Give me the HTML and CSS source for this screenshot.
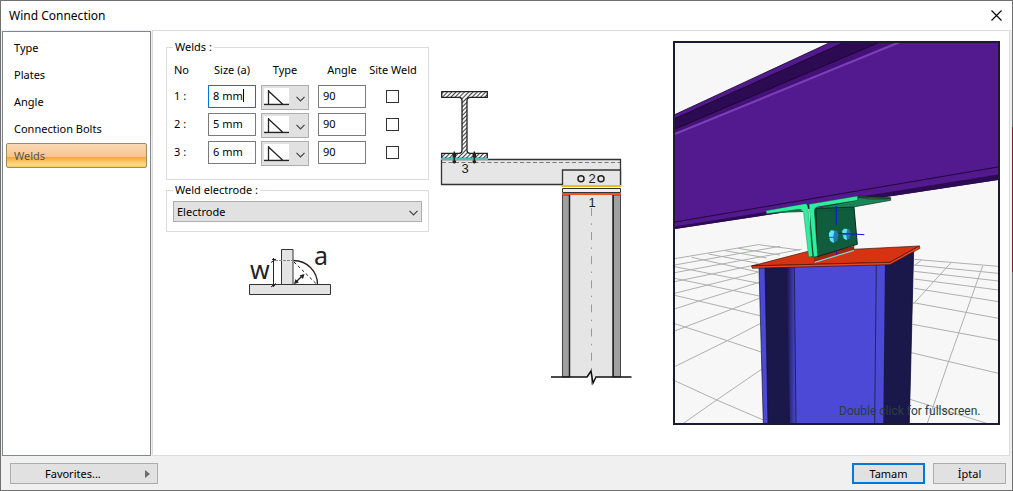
FILE: index.html
```html
<!DOCTYPE html>
<html lang="en">
<head>
<meta charset="utf-8">
<title>Wind Connection</title>
<link rel="stylesheet" href="styles.css">
</head>
<body>
<main class="dialog">
  <header class="titlebar">
    <h1 class="title">Wind Connection</h1>
    <button class="close" type="button" aria-label="Close">
      <svg width="11" height="11" viewBox="0 0 11 11"><path d="M.5.5l10 10M10.5.5l-10 10" stroke="#000" stroke-width="1.1"/></svg>
    </button>
  </header>

  <div class="body">
    <nav class="pages">
      <button class="page" type="button">Type</button>
      <button class="page" type="button">Plates</button>
      <button class="page" type="button">Angle</button>
      <button class="page" type="button">Connection Bolts</button>
      <button class="page selected" type="button" aria-current="page">Welds</button>
    </nav>

    <section class="panel">
      <form class="settings">
        <fieldset class="group">
          <legend>Welds :</legend>
          <div class="welds">
            <span>No</span><span class="head">Size (a)</span><span class="head">Type</span><span class="head">Angle</span><span class="head site">Site Weld</span>

            <span class="no">1 :</span>
            <span class="caret"><input class="field active" aria-label="Size 1" value="8 mm"></span>
            <span class="pick"><select class="drop small" aria-label="Type 1"><option aria-label="Fillet"></option></select><svg class="fillet" width="25" height="18" viewBox="0 0 25 18"><path d="M0 0h25v18H0z" fill="#fff"/><path d="M0 16.500h25M4.500 2v14M4.500 3l14 13" stroke="#222" stroke-width="1.300" fill="none"/></svg><svg class="arrow" width="9" height="6" viewBox="0 0 9 6"><path d="M.5.8l4 4 4-4" stroke="#444" stroke-width="1.200" fill="none"/></svg></span>
            <input class="field" aria-label="Angle 1" value="90">
            <input class="check" type="checkbox" aria-label="Site weld 1">

            <span class="no">2 :</span>
            <input class="field" aria-label="Size 2" value="5 mm">
            <span class="pick"><select class="drop small" aria-label="Type 2"><option aria-label="Fillet"></option></select><svg class="fillet" width="25" height="18" viewBox="0 0 25 18"><path d="M0 0h25v18H0z" fill="#fff"/><path d="M0 16.500h25M4.500 2v14M4.500 3l14 13" stroke="#222" stroke-width="1.300" fill="none"/></svg><svg class="arrow" width="9" height="6" viewBox="0 0 9 6"><path d="M.5.8l4 4 4-4" stroke="#444" stroke-width="1.200" fill="none"/></svg></span>
            <input class="field" aria-label="Angle 2" value="90">
            <input class="check" type="checkbox" aria-label="Site weld 2">

            <span class="no">3 :</span>
            <input class="field" aria-label="Size 3" value="6 mm">
            <span class="pick"><select class="drop small" aria-label="Type 3"><option aria-label="Fillet"></option></select><svg class="fillet" width="25" height="18" viewBox="0 0 25 18"><path d="M0 0h25v18H0z" fill="#fff"/><path d="M0 16.500h25M4.500 2v14M4.500 3l14 13" stroke="#222" stroke-width="1.300" fill="none"/></svg><svg class="arrow" width="9" height="6" viewBox="0 0 9 6"><path d="M.5.8l4 4 4-4" stroke="#444" stroke-width="1.200" fill="none"/></svg></span>
            <input class="field" aria-label="Angle 3" value="90">
            <input class="check" type="checkbox" aria-label="Site weld 3">
          </div>
        </fieldset>

        <fieldset class="group">
          <legend>Weld electrode :</legend>
          <div class="pick wide">
            <select class="drop" aria-label="Weld electrode"><option>Electrode</option></select><svg class="arrow" width="9" height="6" viewBox="0 0 9 6"><path d="M.5.8l4 4 4-4" stroke="#444" stroke-width="1.200" fill="none"/></svg>
          </div>
        </fieldset>

        <svg class="legend-pic" width="84" height="62" viewBox="248 236 84 62">
          <g fill="#e4e4e4" stroke="#333"><path d="M281.500 250.500h11.500v35h-11.500zM249.500 285.500h81v10h-81z"/></g>
          <g fill="none" stroke="#222">
            <path d="M293.500 261.500A24 24 0 0 1 317.500 285.500" stroke-width="1.300"/>
            <path d="M294 263l22.500 22" stroke-dasharray="3 2.500"/>
            <path d="M295 284l8-8" stroke-width="1.300"/>
            <path d="M275 261.500h18" stroke="#888" stroke-dasharray="3 1"/>
            <path d="M273.500 259v29M271 263.500l5-3.500M271 288l5-3.500M272 260.500h3M272 286.500h3"/>
          </g>
          <path d="M294 285l1.500-5 3.300 3.500zM304.500 275l-1.500 5-3.500-3.500z" fill="#222"/>
          <text class="symbol" x="250" y="280">w</text>
          <text class="symbol" x="314" y="266">a</text>
        </svg>
      </form>

      <svg class="section" width="192" height="304" viewBox="440 84 192 304">
        <defs>
          <pattern id="hatch" width="3" height="3" patternUnits="userSpaceOnUse" patternTransform="rotate(45)"><path d="M0 0h3v3H0z" fill="#f5f5f5"/><path d="M.5 0v3" stroke="#444"/></pattern>
        </defs>
        <path d="M441.500 159.500h179v25h-179z" fill="#e6e6e6" stroke="#333" stroke-width="1.300"/>
        <path d="M442 162.500h178" stroke="#777" stroke-dasharray="4 2.500"/>
        <path d="M441.700 91.700h45.600v5.600h-17q-3.300 0-3.300 3.300v49.500q0 3.300 3.300 3.300h17v5h-45.600v-5h17.500q2.800 0 2.800-3.300v-49.500q0-3.300-2.800-3.300h-17.500z" fill="url(#hatch)" stroke="#222" stroke-width="1.300"/>
        <path d="M441 159h47" stroke="#50bcc0" stroke-width="2"/>
        <path d="M454.300 151.500v12M474.300 151.500v12" stroke="#222" stroke-width="1.500"/>
        <path d="M454.300 153.500v4M474.300 153.500v4M454.300 160.500v2.500M474.300 160.500v2.500" stroke="#222" stroke-width="3.500"/>
        <path d="M562.500 170h58v16h-58z" fill="#e6e6e6" stroke="#333" stroke-width="1.300"/>
        <g fill="none" stroke="#222" stroke-width="1.500"><circle cx="581" cy="178.800" r="3"/><circle cx="601" cy="178.800" r="3"/></g>
        <path d="M562.500 188.500h58v4h-58z" fill="#eee" stroke="#333"/>
        <path d="M562 195h58.500v182H562z" fill="#e5e5e5"/>
        <path d="M562.500 195h7v182h-7zM613.500 195h7v182h-7z" fill="#a0a0a0" stroke="#444"/>
        <path d="M569.500 195v182M613 195v182" stroke="#222" stroke-width="1.500"/>
        <path d="M562 186h59" stroke="#f5b81c" stroke-width="2"/>
        <path d="M562 194h59" stroke="#f4511e" stroke-width="2"/>
        <path d="M591.500 208v180" stroke="#999" stroke-dasharray="8 7.300 1.500 7.300"/>
        <path d="M551 377h36l4-6 2 12 3-6h35.500" fill="none" stroke="#111" stroke-width="1.500"/>
        <text class="mark" x="465" y="173">3</text>
        <text class="mark" x="592" y="183">2</text>
        <text class="mark" x="592" y="207">1</text>
      </svg>

      <svg class="viewer" viewBox="675 43 323 380" role="img" aria-label="3D preview">
        <defs>
          <linearGradient id="fillet3d"><stop offset="0" stop-color="#1a184b"/><stop offset="1" stop-color="#4b49d4"/></linearGradient>
        </defs>
        <path d="M675 43h323v380H675z" fill="#f7f7f7"/>
        <!-- ground grid -->
        <g transform="translate(670 230) scale(.3333)" fill="none" stroke="#adb0ad" stroke-width="3">
          <path d="M14 86L265 44M14 105L330 49M14 128L395 58M14 155L265 103M14 190L265 127M14 237L87 213L268 157M14 303L187 237L268 205M14 410L172 332L272 280M40 580L140 510L276 417"/>
          <path d="M265 44L390 60M205 55L330 75M165 62L290 84M115 72L265 100M65 82L265 126M14 110L268 160M14 145L268 198M14 196L187 237L270 257M14 281L172 332L273 366M14 452L140 510L280 570"/>
          <path d="M733 88L985 109M733 105L985 130M733 124L985 153M733 147L985 180M733 175L985 215M730 218L985 265M728 283L985 331M724 368L985 430M720 508L950 580M755 90L733 107M843 98L730 222M938 108L835 397L772 580"/>
        </g>
        <!-- rafter -->
        <path d="M675 114.500L829 43h169v137L675 229z" fill="#53198f"/>
        <path d="M675 118.500L843 43h35L675 129z" fill="#2d0b52"/>
        <path d="M675 129L878 43h16L675 133z" fill="#431177"/>
        <path d="M675 134L900 42" stroke="#793fb5" stroke-width="2.200"/>
        <path d="M675 226.500L998 174.500v5.500L675 229z" fill="#2d0b52"/>
        <path d="M675 114.500L829 43M675 118.500L843 43M675 129L878 43M675 222L998 167" stroke="#140423" stroke-width=".8" fill="none"/>
        <!-- column -->
        <g transform="translate(670 230) scale(.3333)">
          <path d="M267 112L645 100 731 62 718 580H280z" fill="#4b49d6"/>
          <path d="M285 112h70l8 468h-69z" fill="#1a184b"/>
          <path d="M350 110h23l5 470h-18z" fill="url(#fillet3d)"/>
          <path d="M645 100L731 62 718 580h-78z" fill="#1a184b"/>
          <path d="M267 112l13 468M285 112l9 468M373 108l5 472M619 103l-5 477M731 65l-13 515" stroke="#10102c" stroke-width="2" fill="none"/>
        </g>
        <!-- cap plate and cleats -->
        <g transform="translate(745 185) scale(.3333)" stroke-linejoin="round">
          <path d="M20 243L185 200 523 183 435 232z" fill="#d53312" stroke="#301008" stroke-width="2"/>
          <path d="M20 243L435 232 523 183 525 190 435 239 22 250z" fill="#ef4622" stroke="#301008" stroke-width="2"/>
          <path d="M207 210L327 184v12L209 232z" fill="#a02512" stroke="#301008"/>
          <path d="M209 232L327 196" stroke="#83ced0" stroke-width="4"/>
          <path d="M195 60l18 4 8 150-24 2z" fill="#0b452e"/>
          <path d="M213 70L327 66 337 178 217 215z" fill="#105d3e" stroke="#08281c" stroke-width="3"/>
          <path d="M215 70L338 45 338 33 437 38 437 46 325 66z" fill="#188658" stroke="#08281c" stroke-width="2"/>
          <path d="M335 36l100 4-12 2-50 0z" fill="#517b25" stroke="#222" stroke-width="2"/>
          <path d="M85 84l78-12 15 9z" fill="#137147"/>
          <path d="M63 77L181 56Q188 57 189 68L203 214 191 216 176 85Q174 73 162 73L65 86z" fill="#2fef9d" stroke="#0b4a30"/>
          <path d="M192 58L338 33V46L218 65Q207 68 208 80L218 213 206 216z" fill="#2fef9d" stroke="#0b4a30"/>
          <path d="M217 78l109-4" stroke="#0a3c29" stroke-dasharray="8 4"/>
          <path d="M252 145l6-9 18 1 5 12-5 19-12 5-9-10z" fill="#2878a6"/>
          <path d="M252 145l6-9 10 1-3 18h-13zM253 159h12l2 15-11-6z" fill="#54e9f2"/>
          <path d="M290 139l6-8 16 1 5 11-4 18-11 5-9-9z" fill="#2878a6"/>
          <path d="M292 137l6-6 9 1-3 14h-12zM294 151h10l2 14-9-4z" fill="#54e9f2"/>
          <path d="M274 63v57M280 145l78 4M275 197v12" stroke="#1010e8" stroke-width="3"/>
        </g>
        <text class="hint" x="839" y="415">Double click for fullscreen.</text>
      </svg>
    </section>
  </div>

  <footer class="footer">
    <button class="btn favorites" type="button"><span>Favorites...</span><svg width="5" height="8" viewBox="0 0 5 8"><path d="M0 0l5 4-5 4z" fill="#6d6d6d"/></svg></button>
    <button class="btn primary" type="button">Tamam</button>
    <button class="btn" type="button">İptal</button>
  </footer>
</main>
</body>
</html>
```

FILE: styles.css
```css
* { box-sizing: border-box; }
body { margin: 0; }
body, button, input, select { font: 11px/14px "Noto Sans", "Open Sans", sans-serif; color: #000; }
button { cursor: default; }

.dialog {
  position: relative;
  display: flex;
  flex-direction: column;
  min-height: 100vh;
  background: #f0f0f0;
  border: 1px solid #707070;
}
/* desktop showing through the right frame edge */
.dialog::after {
  content: "";
  position: absolute;
  top: 126px;
  right: -1px;
  width: 1px;
  height: 145px;
  background: #7a1c20;
}
.titlebar {
  display: flex;
  align-items: center;
  justify-content: space-between;
  height: 29px;
  padding: 0 10px 0 8px;
  background: #fff;
}
.title { margin: 0; font-size: 12px; line-height: 17px; font-weight: 400; }
.close { display: flex; padding: 0; border: 0; background: none; }

.body { display: flex; flex: 1; gap: 1px; padding: 0 2px 0 1px; background: #f0f0f0; }
.pages {
  display: flex;
  flex-direction: column;
  gap: 2px;
  flex: none;
  width: 149px;
  margin-top: 1px;
  padding: 3px;
  border: 1px solid #828790;
  background: #fff;
}
.page {
  height: 25px;
  padding: 0 7px;
  border: 1px solid transparent;
  border-radius: 2px;
  background: none;
  text-align: left;
}
.page.selected {
  color: #555;
  border-color: #a8895a;
  background: linear-gradient(#f9d9b8 0%, #f8c588 55%, #f7a938 58%, #fddc82 90%, #fbc860 100%);
}

.panel {
  display: flex;
  align-items: flex-start;
  flex: 1;
  padding: 9px 9px 8px 13px;
  border: 1px solid #dcdcdc;
  background: #fff;
}
.settings { flex: none; width: 263px; }
.group { margin: 0 0 3px; padding: 0 6px 9px; border: 1px solid #dcdcdc; min-width: 0; }
.group legend { padding: 0 2px; }
.welds {
  display: grid;
  grid-template-columns: 35px 53px 57px 48px 54px;
  grid-template-rows: 22px 28px 28px 28px;
  align-items: start;
  padding: 9px 0 1px;
}
.welds > span:first-child { padding-left: 1px; }
.head { width: 48px; text-align: center; }
.site { width: 54px; white-space: nowrap; }
.no { padding: 4px 1px 0; }
.field {
  display: block;
  width: 48px;
  height: 23px;
  padding: 0 4px 2px;
  border: 1px solid #7a7a7a;
  border-radius: 0;
  background: #fff;
  outline: 0;
}
.active { border-color: #0078d7; }
.caret { position: relative; }
.caret::after { content: ""; position: absolute; left: 35px; top: 4px; width: 1px; height: 13px; background: #000; }
.pick { position: relative; display: block; width: 48px; }
.drop {
  display: block;
  appearance: none;
  width: 100%;
  height: 21px;
  padding: 0 3px;
  border: 1px solid #adadad;
  border-radius: 0;
  background: #e1e1e1;
}
.small { height: 25px; }
.fillet { position: absolute; left: 3px; top: 3px; pointer-events: none; }
.arrow { position: absolute; right: 4px; top: 50%; margin-top: -2px; pointer-events: none; }
.wide { width: 100%; margin-top: 4px; }
.check {
  appearance: none;
  width: 13px;
  height: 13px;
  margin: 5px 0 0 20px;
  border: 1px solid #333;
  background: #fff;
}
.legend-pic { display: block; margin: 0 0 0 82px; }
.symbol { font-size: 25px; fill: #222; }
.section { flex: none; margin: 44px 0 0 11px; }
.mark { font: 13px "Liberation Sans", Arial, sans-serif; text-anchor: middle; fill: #222; }
.viewer { flex: 1; min-width: 0; margin: 1px 0 0 41px; border: 2px solid #1a1a33; }
.hint { font: 12px Roboto, "Noto Sans", sans-serif; fill: #2c3d3d; }

.footer { display: flex; gap: 8px; padding: 7px 6px 6px 9px; }
.btn { width: 73px; height: 21px; padding: 0; border: 1px solid #adadad; background: #e1e1e1; }
.primary { border: 2px solid #0078d7; }
.favorites { display: flex; align-items: center; width: 148px; margin-right: auto; padding: 0 7px 0 34px; justify-content: space-between; }
```
